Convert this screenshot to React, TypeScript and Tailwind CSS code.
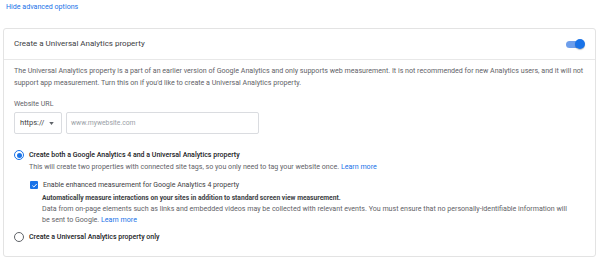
function Toggle() {
  return (
    <div className="relative flex h-[10px] w-[19px] items-center">
      <div className="h-[7px] w-[17px] rounded-full bg-[#6d9eeb]" />
      <div className="absolute right-0 top-0 h-[10px] w-[10px] rounded-full bg-[#1a73e8] shadow-[0_1px_1px_rgba(0,0,0,0.25)]" />
    </div>
  )
}

function Radio({ checked }: { checked?: boolean }) {
  return checked ? (
    <span className="flex h-[10px] w-[10px] shrink-0 items-center justify-center rounded-full border-[1.5px] border-[#1a73e8]">
      <span className="h-[5px] w-[5px] rounded-full bg-[#1a73e8]" />
    </span>
  ) : (
    <span className="h-[10px] w-[10px] shrink-0 rounded-full border border-[#5f6368]" />
  )
}

function Checkbox() {
  return (
    <span className="flex h-[8px] w-[8px] shrink-0 items-center justify-center rounded-[1px] bg-[#1a73e8]">
      <svg viewBox="0 0 10 10" className="h-[7px] w-[7px]">
        <path d="M2 5.2 L4.1 7.2 L8.2 2.8" fill="none" stroke="white" strokeWidth="1.4" />
      </svg>
    </span>
  )
}

export default function App() {
  return (
    <div className="h-[260px] w-[600px] overflow-hidden bg-white font-['Roboto',sans-serif] text-[#5f6368]">
      <div className="h-[28px] px-[6px] pt-[2px] text-[7.1px] leading-[10px]">
        <a href="#" className="text-[#1a73e8]">
          Hide advanced options
        </a>
      </div>

      <div className="ml-[3px] h-[229px] w-[593px] rounded-[3px] border border-[#e3e3e3]">
        <div className="flex h-[31px] items-center justify-between border-b border-[#e8e8e8] pl-[10px] pr-[10px]">
          <span className="text-[8px] text-[#3c4043]">Create a Universal Analytics property</span>
          <Toggle />
        </div>

        <div className="px-[10px] pt-[5px]">
          <p className="text-[7.1px] leading-[11.5px]">
            The Universal Analytics property is a part of an earlier version of Google Analytics and only supports web
            measurement. It is not recommended for new Analytics users, and it will not support app measurement. Turn
            this on if you'd like to create a Universal Analytics property.
          </p>

          <div className="mt-[11px] text-[7px] leading-[10px]">Website URL</div>

          <div className="mt-[3px] flex gap-[4px]">
            <div className="flex h-[22px] w-[48px] items-center justify-between rounded-[2px] border border-[#dadce0] pl-[5px] pr-[7px]">
              <span className="text-[7.5px] text-[#3c4043]">https://</span>
              <svg viewBox="0 0 6 4" className="h-[3px] w-[5px]">
                <path d="M0 0 H6 L3 4 Z" fill="#5f6368" />
              </svg>
            </div>
            <div className="flex h-[22px] w-[193px] items-center rounded-[2px] border border-[#dadce0] px-[4px]">
              <span className="text-[6.8px] text-[#9aa0a6]">www.mywebsite.com</span>
            </div>
          </div>

          <div className="mt-[16px] flex items-center gap-[5px]">
            <Radio checked />
            <span className="text-[7px] font-medium leading-[10px] text-[#202124]">
              Create both a Google Analytics 4 and a Universal Analytics property
            </span>
          </div>
          <div className="mt-[2px] pl-[15px] text-[7.1px] leading-[10px]">
            This will create two properties with connected site tags, so you only need to tag your website once.{' '}
            <a href="#" className="text-[#1a73e8]">
              Learn more
            </a>
          </div>

          <div className="mt-[8px] flex items-center gap-[5px] pl-[16px]">
            <Checkbox />
            <span className="text-[7px] leading-[10px] text-[#3c4043]">
              Enable enhanced measurement for Google Analytics 4 property
            </span>
          </div>
          <div className="mt-[3px] pl-[28px] text-[6.7px] font-bold leading-[10px] text-[#3c4043]">
            Automatically measure interactions on your sites in addition to standard screen view measurement.
          </div>
          <p className="pl-[28px] pr-[14px] text-[7.1px] leading-[11px]">
            Data from on-page elements such as links and embedded videos may be collected with relevant events. You
            must ensure that no personally-identifiable information will be sent to Google.{' '}
            <a href="#" className="text-[#1a73e8]">
              Learn more
            </a>
          </p>

          <div className="mt-[7px] flex items-center gap-[5px]">
            <Radio />
            <span className="text-[7px] font-medium leading-[10px] text-[#202124]">
              Create a Universal Analytics property only
            </span>
          </div>
        </div>
      </div>
    </div>
  )
}
